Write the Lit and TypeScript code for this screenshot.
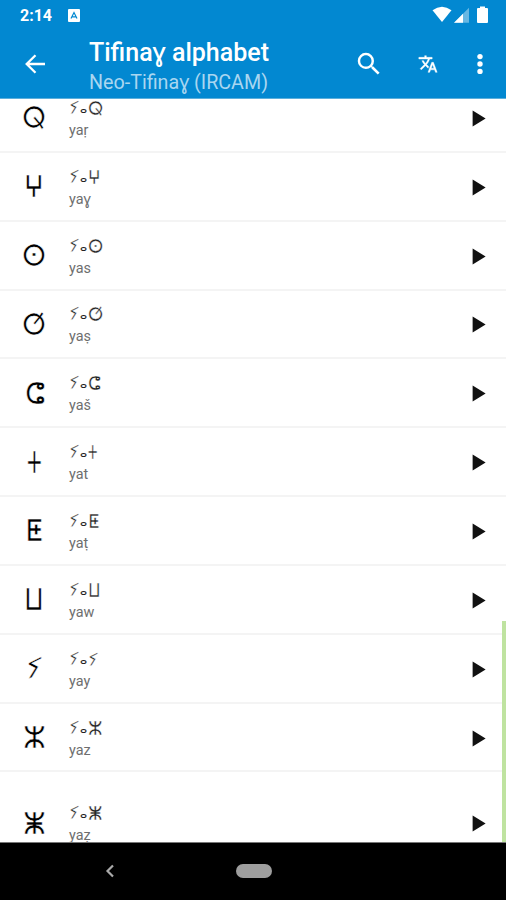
import { LitElement, html, css } from "lit";
import { customElement, property } from "lit/decorators.js";
import { styleMap } from "lit/directives/style-map.js";

// letter, name, transform that proportions the letter form
const LETTERS: [string, string, string][] = [
  ["ⵕ", "yaṛ", "scaleX(0.9)"],
  ["ⵖ", "yaɣ", "scaleX(0.87)"],
  ["ⵙ", "yas", "scaleX(0.9)"],
  ["ⵚ", "yaṣ", "scaleX(0.9)"],
  ["ⵛ", "yaš", "scaleX(0.95)"],
  ["ⵜ", "yat", "scaleX(0.64)"],
  ["ⵟ", "yaṭ", "scaleX(0.98)"],
  ["ⵡ", "yaw", "scaleX(0.88)"],
  ["ⵢ", "yay", "skewY(-26deg) scale(0.92, 0.72)"],
  ["ⵣ", "yaz", "scaleX(0.97)"],
  ["ⵥ", "yaẓ", "scaleX(0.97)"],
];

@customElement("letter-row")
export class LetterRow extends LitElement {
  @property() letter = "";
  @property() name = "";
  @property() shape = "none";

  static styles = css`
    :host {
      box-sizing: border-box;
      display: flex;
      align-items: center;
      height: 68.85px;
      flex: none;
      border-bottom: 2px solid #f4f4f4;
      padding: 2px 20px 0 0;
    }
    .glyph {
      width: 69px;
      text-align: center;
      font: 200 30px/34px "DejaVu Sans Light", "DejaVu Sans", sans-serif;
      color: #000;
      -webkit-text-stroke: 0.6px #fff;
    }
    .names {
      flex: 1;
      padding-top: 2px;
    }
    .native {
      display: flex;
      height: 21px;
      font: 200 18.5px/21px "DejaVu Sans Light", "DejaVu Sans", sans-serif;
      color: #222;
      -webkit-text-stroke: 0.45px #fff;
    }
    .y {
      width: 11px;
      transform: skewY(-26deg) scale(0.92, 0.72);
      transform-origin: 40% 50%;
    }
    .a {
      width: 7.5px;
      font-size: 11px;
      line-height: 24px;
      -webkit-text-stroke: 0;
    }
    .form {
      display: inline-block;
    }
    .native .form {
      transform-origin: 0 50%;
    }
    .native .yay {
      transform-origin: 50% 50%;
    }
    .latin {
      font: 14.4px/23px Roboto, "Noto Sans", sans-serif;
      color: #6e6e6e;
      margin-bottom: -1px;
    }
    .play {
      display: block;
      width: 14px;
      height: 17px;
      fill: #111;
    }
  `;

  render() {
    const form = styleMap({ transform: this.shape });
    const cls = this.letter === "ⵢ" ? "form yay" : "form";
    return html`
      <div class="glyph"><span class=${cls} style=${form}>${this.letter}</span></div>
      <div class="names">
        <div class="native">
          <span class="y">ⵢ</span><span class="a">ⴰ</span><span class=${cls} style=${form}>${this.letter}</span>
        </div>
        <div class="latin">${this.name}</div>
      </div>
      <svg class="play" viewBox="0 0 14 17"><path d="M.6.5 13.6 8.5.6 16.5z" /></svg>
    `;
  }
}

@customElement("app-root")
export class AppRoot extends LitElement {
  static styles = css`
    :host {
      display: flex;
      flex-direction: column;
      height: 900px;
      background: #fff;
      overflow: hidden;
      font-family: Roboto, "Noto Sans", sans-serif;
    }
    svg {
      display: block;
      flex: none;
    }
    header {
      height: 98px;
      flex: none;
      background: #0288d1;
      color: #fff;
      border-bottom: 1px solid #5cafdc;
    }
    .status {
      display: flex;
      align-items: center;
      height: 30px;
      padding: 0 17px 0 20px;
    }
    .time {
      font-size: 16px;
      font-weight: 700;
      line-height: 30px;
      padding-top: 2px;
      width: 48px;
    }
    .signals {
      margin-left: auto;
    }
    .bar {
      display: flex;
      align-items: center;
      height: 68px;
      padding-left: 22px;
    }
    .titles {
      margin-left: 41px;
      width: 265px;
      padding-top: 6px;
    }
    .title {
      font-size: 25px;
      font-weight: 500;
      line-height: 31px;
      white-space: nowrap;
    }
    .sub {
      font-size: 19.7px;
      line-height: 29px;
      color: #a9d6f0;
      white-space: nowrap;
    }
    .translate {
      margin-left: 34px;
    }
    .more {
      margin-left: 38px;
    }
    .list {
      position: relative;
      flex: 1;
      min-height: 0;
      overflow: hidden;
      display: flex;
      flex-direction: column;
    }
    .first {
      margin-top: -15px;
    }
    .last {
      height: 101px;
      border: 0;
    }
    .thumb {
      position: absolute;
      right: 0;
      bottom: 0;
      width: 4px;
      height: 221px;
      background: #bfe3a0;
    }
    nav {
      display: flex;
      align-items: center;
      height: 58px;
      flex: none;
      background: #000;
      padding-left: 105px;
      padding-bottom: 2px;
      border-top: 1px solid #777;
      box-sizing: border-box;
    }
    .home {
      width: 36px;
      height: 14px;
      border-radius: 7px;
      background: #9e9e9e;
      margin-left: 121px;
    }
  `;

  render() {
    return html`
      <header>
        <div class="status">
          <span class="time">2:14</span>
          <svg width="12" height="13" viewBox="0 0 12 13">
            <rect width="12" height="13" rx="1" fill="#fff" />
            <path d="M3 9.5 6 3.5 9 9.5M4.3 7.8h3.4" fill="none" stroke="#0288d1" stroke-width="1.2" />
          </svg>
          <svg class="signals" width="57" height="18" viewBox="0 0 57 18" fill="#fff">
            <path d="M.5 4.2Q10-2.8 19.5 4.2L10 16z" />
            <path d="M22 16.8 37 1.8v15z" opacity=".4" />
            <path d="M22 16.8 31 7.8v9z" />
            <path d="M46 2h2V.5h5V2h2q1 0 1 1v13q0 1-1 1h-9q-1 0-1-1V3q0-1 1-1z" />
          </svg>
        </div>
        <div class="bar">
          <svg width="26" height="26" viewBox="0 0 26 26" fill="none" stroke="#fff" stroke-width="2.3">
            <path d="M23 13H5M13.5 4.2 4.7 13l8.8 8.8" />
          </svg>
          <div class="titles">
            <div class="title">Tifinaɣ alphabet</div>
            <div class="sub">Neo-Tifinaɣ (IRCAM)</div>
          </div>
          <svg width="30" height="30" viewBox="0 0 24 24" fill="#fff">
            <path
              d="M15.5 14h-.79l-.28-.27A6.47 6.47 0 0 0 16 9.5 6.5 6.5 0 1 0 9.5 16c1.61 0 3.09-.59 4.23-1.57l.27.28v.79l5 4.99L20.49 19l-4.99-5zm-6 0C7.01 14 5 11.99 5 9.5S7.01 5 9.5 5 14 7.01 14 9.5 11.99 14 9.5 14z"
            />
          </svg>
          <svg class="translate" width="20" height="20" viewBox="0 1 24 22" fill="#fff" stroke="#fff" stroke-width=".5">
            <path
              d="M12.87 15.07l-2.54-2.51.03-.03A17.52 17.52 0 0 0 14.07 6H17V4h-7V2H8v2H1v1.99h11.17C11.5 7.92 10.44 9.75 9 11.35 8.07 10.32 7.3 9.19 6.69 8h-2c.73 1.63 1.73 3.17 2.98 4.56l-5.09 5.02L4 19l5-5 3.11 3.11.76-2.04zM18.5 10h-2L12 22h2l1.12-3h4.75L21 22h2l-4.5-12zm-2.62 7l1.62-4.33L19.12 17h-3.24z"
            />
          </svg>
          <svg class="more" width="8" height="22" viewBox="0 0 8 22" fill="#fff">
            <circle cx="4" cy="3.6" r="2.7" />
            <circle cx="4" cy="11" r="2.7" />
            <circle cx="4" cy="18.4" r="2.7" />
          </svg>
        </div>
      </header>
      <div class="list">
        ${LETTERS.map(
          ([letter, name, shape], i) => html`<letter-row
            class=${i === 0 ? "first" : i === LETTERS.length - 1 ? "last" : ""}
            .letter=${letter}
            .name=${name}
            .shape=${shape}
          ></letter-row>`
        )}
        <div class="thumb"></div>
      </div>
      <nav>
        <svg width="10" height="14" viewBox="0 0 10 14" fill="none" stroke="#aaa" stroke-width="2.2">
          <path d="M8 1.5 2.5 7 8 12.5" />
        </svg>
        <div class="home"></div>
      </nav>
    `;
  }
}
